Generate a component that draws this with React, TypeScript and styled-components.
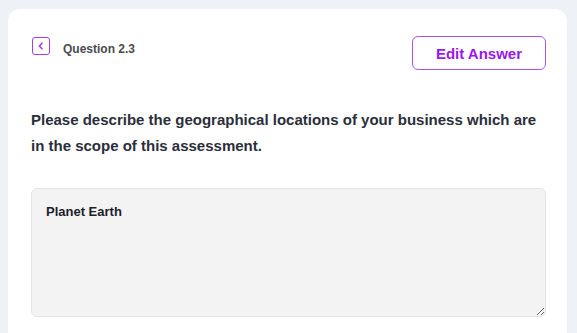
import React from "react";
import styled, { createGlobalStyle } from "styled-components";

const GlobalStyle = createGlobalStyle`
  html, body {
    margin: 0;
    padding: 0;
    background: #eef2f7;
    font-family: "Liberation Sans", Arial, sans-serif;
  }
`;

const Page = styled.div`
  padding: 9px 10px 0 8px;
  height: 333px;
  box-sizing: border-box;
  overflow: hidden;
`;

const Card = styled.div`
  background: #ffffff;
  border-radius: 12px;
  padding: 27px 21px 40px 23px;
  min-height: 400px;
  box-sizing: border-box;
`;

const Header = styled.div`
  display: flex;
  align-items: flex-start;
  justify-content: space-between;
`;

const BackGroup = styled.div`
  display: flex;
  align-items: flex-end;
  gap: 13px;
  padding-top: 1px;
`;

const BackButton = styled.button`
  width: 18px;
  height: 18px;
  padding: 0;
  margin-left: 1px;
  border: 1.5px solid #a43cf5;
  border-radius: 3px;
  background: #fff;
  display: flex;
  align-items: center;
  justify-content: center;
  color: #a43cf5;
  box-sizing: border-box;
`;

const QuestionLabel = styled.span`
  font-size: 12px;
  font-weight: 700;
  line-height: 14px;
  color: #4a4a50;
  margin-bottom: -1px;
`;

const EditButton = styled.button`
  width: 134px;
  height: 34px;
  border: 1.5px solid #a855f7;
  border-radius: 6px;
  background: #fff;
  color: #9818ee;
  font-family: inherit;
  font-size: 15px;
  font-weight: 700;
`;

const Prompt = styled.p`
  margin: 37px 0 0;
  font-size: 15px;
  font-weight: 700;
  line-height: 26px;
  color: #2b2e3b;
  max-width: 512px;
`;

const Answer = styled.textarea`
  display: block;
  width: 100%;
  height: 129px;
  margin-top: 29px;
  box-sizing: border-box;
  padding: 15px 14px;
  background: #f3f3f3;
  border: 1px solid #e3e3e3;
  border-radius: 6px;
  font-family: inherit;
  font-size: 13px;
  font-weight: 700;
  color: #1c1f2b;
  outline: none;
`;

function BackIcon() {
  return (
    <svg width="10" height="10" viewBox="0 0 10 10" fill="none">
      <path d="M6 2.2 3.4 5 6 7.8" stroke="currentColor" strokeWidth="1.6" strokeLinecap="round" strokeLinejoin="round" />
    </svg>
  );
}

export default function App() {
  return (
    <>
      <GlobalStyle />
      <Page>
        <Card>
          <Header>
            <BackGroup>
              <BackButton aria-label="Back">
                <BackIcon />
              </BackButton>
              <QuestionLabel>Question 2.3</QuestionLabel>
            </BackGroup>
            <EditButton>Edit Answer</EditButton>
          </Header>
          <Prompt>
            Please describe the geographical locations of your business which are in the scope of this assessment.
          </Prompt>
          <Answer readOnly defaultValue="Planet Earth" />
        </Card>
      </Page>
    </>
  );
}
